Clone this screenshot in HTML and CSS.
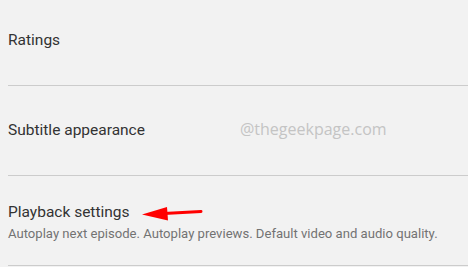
FILE: index.html
```html
<!DOCTYPE html>
<html lang="en">
<head>
    <meta charset="UTF-8">
    <title>Settings</title>
    <link rel="stylesheet" href="styles.css">
</head>
<body>
    <div class="settings-list">
        <div class="settings-row">
            <div class="row-title">Ratings</div>
        </div>
        <div class="settings-row">
            <div class="row-title">Subtitle appearance</div>
            <span class="watermark">@thegeekpage.com</span>
        </div>
        <div class="settings-row with-desc">
            <div class="row-title">
                Playback settings
                <svg class="arrow" width="62" height="16" viewBox="0 0 62 16">
                    <path d="M22 8.6 L59 6.4" stroke="#f00" stroke-width="3" stroke-linecap="round" fill="none"/>
                    <polygon points="0,9.5 25,2 26,15.5" fill="#f00"/>
                </svg>
            </div>
            <div class="row-desc">Autoplay next episode. Autoplay previews. Default video and audio quality.</div>
        </div>
    </div>
</body>
</html>
```

FILE: styles.css
```css
* {
    box-sizing: border-box;
    margin: 0;
    padding: 0;
}
html, body {
    height: 100%;
    background-color: #f2f2f2;
    font-family: Roboto, Arial, sans-serif;
    overflow: hidden;
}
.settings-list {
    margin-top: -4px;
    padding-left: 8px;
}
.settings-row {
    position: relative;
    height: 90px;
    padding-bottom: 2px;
    border-bottom: 1px solid #cccccc;
    display: flex;
    flex-direction: column;
    justify-content: center;
}
.settings-row.with-desc {
    padding-top: 4px;
    padding-bottom: 0;
}
.row-title {
    display: flex;
    align-items: center;
    color: #333333;
    font-size: 15.5px;
    line-height: 20px;
}
.row-desc {
    color: #737373;
    font-size: 13.1px;
    line-height: 18px;
    margin-top: 3px;
    white-space: nowrap;
}
.arrow {
    margin-left: 12px;
    margin-top: 2px;
}
.watermark {
    position: absolute;
    left: 232px;
    top: 32px;
    font-family: "Open Sans", sans-serif;
    font-size: 16px;
    color: #c4c4c4;
}
```
